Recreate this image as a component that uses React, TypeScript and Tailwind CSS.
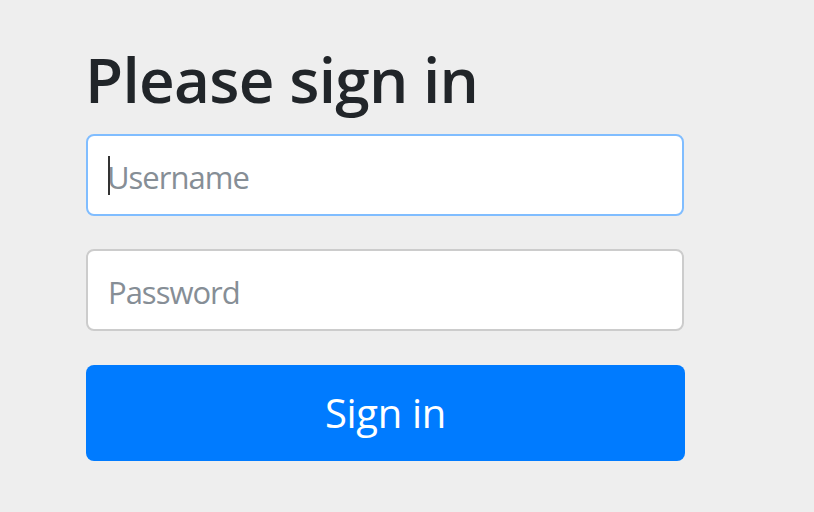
export default function App() {
  return (
    <div className="min-h-[512px] w-full bg-[#eeeeee] font-['Open_Sans',sans-serif]">
      <form className="flex w-[684px] flex-col pl-[86px] pt-[41px]">
        <h2 className="mb-[16px] -ml-[1px] text-[62px] font-semibold leading-[77px] tracking-[-0.7px] text-[#212529]">
          Please sign in
        </h2>
        <div className="relative flex h-[82px] items-center rounded-[8px] border-2 border-[#80bdff] bg-white pl-[19px] pt-[4px]">
          <span className="absolute left-[20px] top-[20px] h-[39px] w-[2px] bg-[#333]" />
          <span className="text-[31px] tracking-[-1px] text-[#868e96]">Username</span>
        </div>
        <div className="mt-[33px] flex h-[82px] items-center rounded-[8px] border-2 border-[#cccccc] bg-white pl-[20px] pt-[4px]">
          <span className="text-[31px] tracking-[-1px] text-[#868e96]">Password</span>
        </div>
        <button
          type="button"
          className="mt-[34px] h-[96px] w-[599px] rounded-[8px] bg-[#007bff] text-[40px] tracking-[-0.3px] text-white"
        >
          Sign in
        </button>
      </form>
    </div>
  )
}
